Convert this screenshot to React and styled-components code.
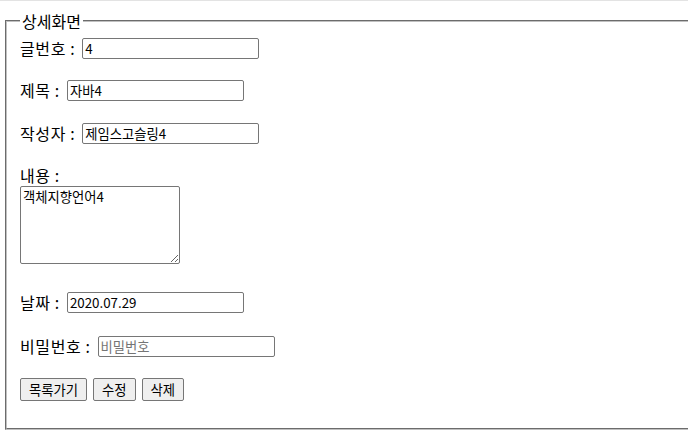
import React from "react";
import styled, { createGlobalStyle } from "styled-components";

const GlobalStyle = createGlobalStyle`
  html, body {
    margin: 0;
    padding: 0;
    background: #ffffff;
    overflow: hidden;
  }
  body {
    font-family: "Noto Sans CJK KR", "Noto Sans", sans-serif;
    font-size: 16px;
    color: #000000;
  }
`;

const Page = styled.div`
  width: 688px;
  height: 447px;
  overflow: hidden;
  border-top: 1px solid #e3e3e3;
  box-sizing: border-box;
  padding: 11px 0 0 5px;
`;

const Fieldset = styled.fieldset`
  width: 720px;
  height: 418px;
  box-sizing: border-box;
  margin: 0;
  padding: 0 0 0 13px;
  border: 2px groove #c0c0c0;
`;

const Legend = styled.legend`
  padding: 0 2px;
  font-size: 16px;
  line-height: 18px;
`;

const Form = styled.div`
  display: flex;
  flex-direction: column;
  align-items: flex-start;
  padding-top: 8px;
`;

const Row = styled.div`
  display: flex;
  align-items: center;
  height: 21px;
  margin-top: ${(p) => p.$top}px;
`;

const Label = styled.label`
  font-size: 16px;
  line-height: 21px;
  letter-spacing: 0.6px;
  white-space: pre;
  margin-right: 7px;
`;

const Input = styled.input`
  width: 177px;
  height: 21px;
  box-sizing: border-box;
  margin: 0;
  padding: 1px 2px;
  border: 1px solid #767676;
  border-radius: 2px;
  font-family: "Noto Sans CJK KR", "Noto Sans", sans-serif;
  font-size: 13.33px;
  color: #000000;
  &::placeholder {
    color: #757575;
  }
`;

const TextArea = styled.textarea`
  width: 160px;
  height: 78px;
  box-sizing: border-box;
  margin: 0;
  padding: 2px;
  border: 1px solid #767676;
  border-radius: 2px;
  font-family: "Noto Sans CJK KR", "Noto Sans", sans-serif;
  font-size: 13.33px;
  line-height: 16px;
  resize: both;
`;

const Buttons = styled.div`
  display: flex;
  gap: 6px;
  margin-top: ${(p) => p.$top}px;
`;

const Button = styled.button`
  height: 23px;
  box-sizing: border-box;
  margin: 0;
  padding: 1px 8px;
  background: #efefef;
  border: 1px solid #767676;
  border-radius: 2px;
  font-family: "Noto Sans CJK KR", "Noto Sans", sans-serif;
  font-size: 13.33px;
  color: #000000;
`;

export default function App() {
  return (
    <Page>
      <GlobalStyle />
      <Fieldset>
        <Legend>상세화면</Legend>
        <Form>
          <Row $top={0}>
            <Label>글번호 :</Label>
            <Input defaultValue="4" />
          </Row>
          <Row $top={21}>
            <Label>제목 :</Label>
            <Input defaultValue="자바4" />
          </Row>
          <Row $top={22}>
            <Label>작성자 :</Label>
            <Input defaultValue="제임스고슬링4" />
          </Row>
          <Row $top={21}>
            <Label>내용 :</Label>
          </Row>
          <TextArea defaultValue="객체지향언어4" />
          <Row $top={28}>
            <Label>날짜 :</Label>
            <Input defaultValue="2020.07.29" />
          </Row>
          <Row $top={23}>
            <Label>비밀번호 :</Label>
            <Input placeholder="비밀번호" />
          </Row>
          <Buttons $top={21}>
            <Button>목록가기</Button>
            <Button>수정</Button>
            <Button>삭제</Button>
          </Buttons>
        </Form>
      </Fieldset>
    </Page>
  );
}
